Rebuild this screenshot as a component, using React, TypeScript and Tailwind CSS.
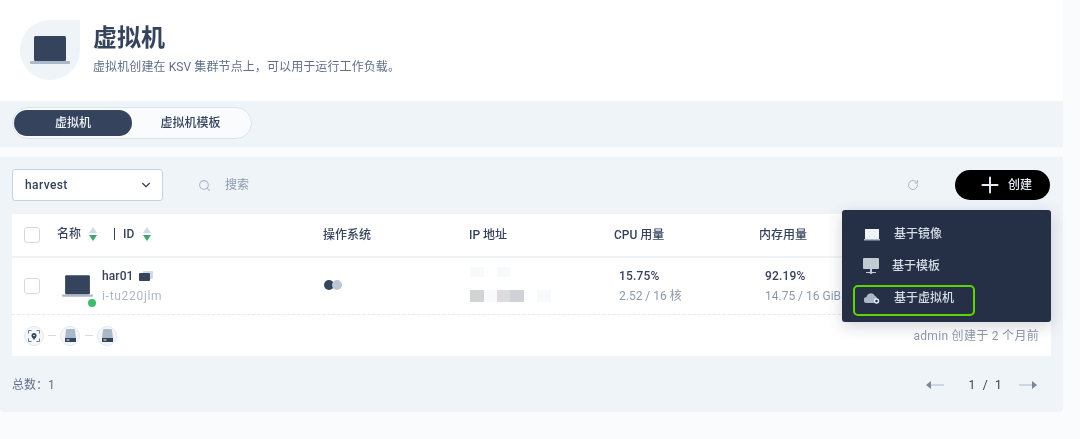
import { Plus, ChevronDown, Search, RotateCw } from "lucide-react";

const font = "font-['Roboto','Noto_Sans_CJK_SC',sans-serif]";

function Laptop({ className }: { className: string }) {
  return (
    <svg className={className} viewBox="0 0 40 30" fill="none">
      <rect x="4" y="1" width="32" height="25" rx="1.5" fill="#36435c" />
      <rect x="0" y="26" width="40" height="3" rx="1" fill="#abb8c8" />
    </svg>
  );
}

function SortArrows() {
  return (
    <svg className="w-[10px] h-[16px]" viewBox="0 0 10 16">
      <path d="M5 1l4 6H1z" fill="#d1d9e3" />
      <path d="M5 15l4-6H1z" fill="#3aa675" />
    </svg>
  );
}

function Disk() {
  return (
    <div className="w-5 h-5 rounded-full bg-[#f4f7fa] border border-[#e3e9ef] flex items-center justify-center">
      <svg className="w-[11px] h-[13px]" viewBox="0 0 11 13">
        <path d="M2 0h7a1 1 0 011 1l1 8H0l1-8a1 1 0 011-1z" fill="#abb8c8" />
        <rect y="9" width="11" height="4" fill="#36435c" />
        <rect x="1.5" y="10.5" width="3" height="1" fill="#eff4f9" />
      </svg>
    </div>
  );
}

function Gpu() {
  return (
    <div className="w-5 h-5 rounded-full bg-[#f4f7fa] border border-[#e3e9ef] flex items-center justify-center">
      <svg className="w-3 h-3" viewBox="0 0 12 12" fill="none">
        <path d="M0.5 3.5v-3h3M8.5 0.5h3v3M11.5 8.5v3h-3M3.5 11.5h-3v-3" stroke="#6d7a8f" />
        <circle cx="6" cy="5.5" r="2.5" fill="#36435c" />
        <path d="M4 7l2 3 2-3z" fill="#36435c" />
        <circle cx="6" cy="5.5" r="0.8" fill="#eff4f9" />
      </svg>
    </div>
  );
}

function Checkbox() {
  return <div className="w-4 h-4 rounded-[3px] border border-[#d1d9e3] bg-white" />;
}

function MenuItem({ icon, label, cls }: { icon: React.ReactNode; label: string; cls: string }) {
  return (
    <div className={`flex items-center h-8 text-[12px] text-[#d5dee7] font-medium ${cls}`}>
      {icon}
      {label}
    </div>
  );
}

export default function App() {
  return (
    <div className={`${font} relative w-[1080px] h-[439px] overflow-hidden bg-[#f9fbfd] text-[#36435c] blur-[0.4px]`}>
      <div className="w-[1063px]">
        {/* Page header */}
        <div className="h-[101px] bg-white pl-5 pt-5 flex gap-[13px]">
          <div className="w-[60px] h-[60px] rounded-full rounded-tr-none bg-[#eff4f9] flex items-center justify-center">
            <Laptop className="w-10 h-[30px]" />
          </div>
          <div>
            <h1 className="text-[24px] leading-[36px] font-bold">虚拟机</h1>
            <p className="text-[12px] leading-[18px] mt-[2px] text-[#5f708a] tracking-[0.1px]">
              虚拟机创建在 KSV 集群节点上，可以用于运行工作负载。
            </p>
          </div>
        </div>

        {/* Tabs */}
        <div className="h-[46px] bg-[#eff4f9] pl-3 pt-[6px]">
          <div className="w-[240px] h-8 py-[2px] pl-[1px] pr-[2px] rounded-full border border-[#dde4ec] bg-[#f9fbfd] flex text-[12px] font-medium">
            <div className="w-[118px] rounded-full bg-[#36435c] text-[#eff4f9] flex items-center justify-center">虚拟机</div>
            <div className="flex-1 flex items-center justify-center">虚拟机模板</div>
          </div>
        </div>

        {/* Panel */}
        <div className="mt-[10px] h-[255px] rounded-b-[4px] bg-[#eff4f9] px-3 pt-3">
          <div className="h-8 flex items-center">
            <div className="w-[151px] h-8 pl-3 pr-[9px] rounded-[3px] border border-[#c9d1db] bg-white flex items-center justify-between text-[12px] font-medium tracking-[0.4px]">
              harvest
              <ChevronDown className="w-[14px] h-[14px]" strokeWidth={2} />
            </div>
            <Search className="w-[13px] h-[13px] ml-[35px] text-[#abb8c8]" strokeWidth={2} />
            <span className="ml-[14px] text-[12px] text-[#8c99ac]">搜索</span>
            <RotateCw className="w-3 h-3 ml-auto text-[#abb8c8]" strokeWidth={2} />
            <button className="ml-[36px] mr-[1px] w-[95px] h-[30px] rounded-full bg-black text-[#e6ecf2] text-[12px] font-medium flex items-center justify-center gap-[5px] pl-[4px]">
              <Plus className="w-[26px] h-[26px]" strokeWidth={1.8} />
              创建
            </button>
          </div>

          {/* Table */}
          <div className="mt-[13px] bg-white">
            <div className="h-[42px] px-3 grid grid-cols-[33px_266px_146px_145px_145px_1fr] items-center border-b-2 border-[#eff4f9] box-content text-[12px] font-medium">
              <Checkbox />
              <div className="flex items-center -mt-[2px]">
                名称
                <span className="ml-[7px]"><SortArrows /></span>
                <span className="ml-[16px] w-px h-3 bg-[#36435c]" />
                <span className="ml-[8px]">ID</span>
                <span className="ml-[8px]"><SortArrows /></span>
              </div>
              <div>操作系统</div>
              <div>IP 地址</div>
              <div>CPU 用量</div>
              <div>内存用量</div>
            </div>

            <div className="h-[57px] px-3 grid grid-cols-[33px_266px_146px_145px_145px_1fr] items-center border-b border-dashed border-[#e3e9ef]">
              <Checkbox />
              <div className="flex items-center pl-[5px]">
                <div className="relative">
                  <Laptop className="w-[31px] h-[26px]" />
                  <span className="absolute -bottom-[8px] right-[-3px] w-2 h-2 rounded-full bg-[#3fbb6f]" />
                </div>
                <div className="ml-[9px]">
                  <div className="flex items-center text-[12px] leading-4 font-medium tracking-[0.1px]">
                    har01
                    <svg className="ml-[5px] w-[14px] h-[12px]" viewBox="0 0 14 12">
                      <rect x="4" y="1" width="10" height="8" rx="1" fill="#d1d9e3" />
                      <rect x="0" y="3" width="11" height="8" rx="1" fill="#36435c" />
                    </svg>
                  </div>
                  <div className="mt-[4px] text-[12px] leading-4 text-[#abb8c8] tracking-[0.7px]">i-tu220jlm</div>
                </div>
              </div>
              <div className="flex pl-[1px] -mt-[2px]">
                <span className="w-[10px] h-[10px] rounded-full bg-[#36435c]" />
                <span className="-ml-[2px] w-[10px] h-[10px] rounded-full bg-[#bcc8d6]" />
              </div>
              <div className="flex flex-col gap-[13px] -mt-[3px]">
                <div className="flex gap-[13px] pl-[1px]">
                  <span className="w-[14px] h-[10px] bg-[#f8f9fb]" />
                  <span className="w-[13px] h-[10px] bg-[#f8f9fb]" />
                </div>
                <div className="flex items-center pl-[1px]">
                  <span className="w-[14px] h-[12px] bg-[#d2d3d5]" />
                  <span className="w-[13px] h-[12px] bg-[#fafbfc]" />
                  <span className="w-[13px] h-[12px] bg-[#dcdcde]" />
                  <span className="w-[14px] h-[12px] bg-[#ced2d6]" />
                  <span className="ml-[13px] w-[14px] h-[12px] bg-[#f8f9fb]" />
                </div>
              </div>
              <div className="pl-[5px]">
                <div className="text-[12px] leading-4 font-medium tracking-[0.2px]">15.75%</div>
                <div className="mt-[4px] text-[12px] leading-4 text-[#8c99ac]">2.52 / 16 核</div>
              </div>
              <div className="pl-[6px]">
                <div className="text-[12px] leading-4 font-medium tracking-[0.2px]">92.19%</div>
                <div className="mt-[4px] text-[12px] leading-4 text-[#8c99ac]">14.75 / 16 GiB</div>
              </div>
            </div>

            <div className="h-[41px] px-3 flex items-center">
              <Gpu />
              <span className="mx-[4px] w-[8px] h-px bg-[#d1d9e3]" />
              <Disk />
              <span className="mx-[4.5px] w-[8px] h-px bg-[#d1d9e3]" />
              <Disk />
              <span className="ml-auto text-[12px] text-[#8c99ac] tracking-[0.3px]">admin 创建于 2 个月前</span>
            </div>
          </div>

          {/* Footer */}
          <div className="mt-[21px] h-4 flex items-center text-[12px]">
            <span className="text-[#5f708a]">总数：1</span>
            <div className="ml-auto mr-[14px] flex items-center text-[#36435c]">
              <svg className="w-[18px] h-[10px]" viewBox="0 0 18 10">
                <path d="M0 5l5-4v8z" fill="#7a8799" />
                <rect x="5" y="4.5" width="13" height="1" fill="#abb8c8" />
              </svg>
              <span className="ml-[25px] mr-[15px] tracking-[2.2px]">1 / 1</span>
              <svg className="w-[18px] h-[10px]" viewBox="0 0 18 10">
                <rect x="0" y="4.5" width="13" height="1" fill="#abb8c8" />
                <path d="M18 5l-5-4v8z" fill="#7a8799" />
              </svg>
            </div>
          </div>
        </div>
      </div>

      {/* Create dropdown */}
      <div className="absolute left-[842px] top-[210px] w-[209px] h-[112px] pt-[8px] rounded-[3px] bg-[#252f45] shadow-[0_4px_16px_rgba(35,45,65,0.2)]">
        <MenuItem
          cls="pl-[22px]"
          label="基于镜像"
          icon={
            <svg className="w-4 h-[13px] mr-[14px]" viewBox="0 0 16 13">
              <rect x="1" y="1" width="14" height="10" fill="#eff4f9" />
              <rect y="11" width="16" height="1.5" fill="#abb8c8" />
            </svg>
          }
        />
        <MenuItem
          cls="pl-[21px]"
          label="基于模板"
          icon={
            <svg className="w-4 h-4 mr-[13px]" viewBox="0 0 16 16">
              <rect y="0" width="16" height="11" rx="1" fill="#c1c9d1" />
              <rect x="7" y="11" width="2" height="3" fill="#c1c9d1" />
              <rect x="3" y="14" width="10" height="1" fill="#c1c9d1" />
              <circle cx="8" cy="14.5" r="1.5" fill="#c1c9d1" />
            </svg>
          }
        />
        <MenuItem
          cls="pl-[22px]"
          label="基于虚拟机"
          icon={
            <svg className="w-4 h-3 mr-[14px]" viewBox="0 0 16 12">
              <path d="M3 11a3 3 0 01-.5-6A4.5 4.5 0 0111 4a3.5 3.5 0 012 2v1a3 3 0 00-3 4z" fill="#abb8c8" />
              <circle cx="12.5" cy="9" r="2" fill="none" stroke="#e6ecf2" strokeWidth="1.5" />
            </svg>
          }
        />
        <div className="absolute left-[11px] top-[75px] w-[122px] h-[31px] rounded-[5px] border-2 border-[#5fd400]" />
      </div>
    </div>
  );
}
